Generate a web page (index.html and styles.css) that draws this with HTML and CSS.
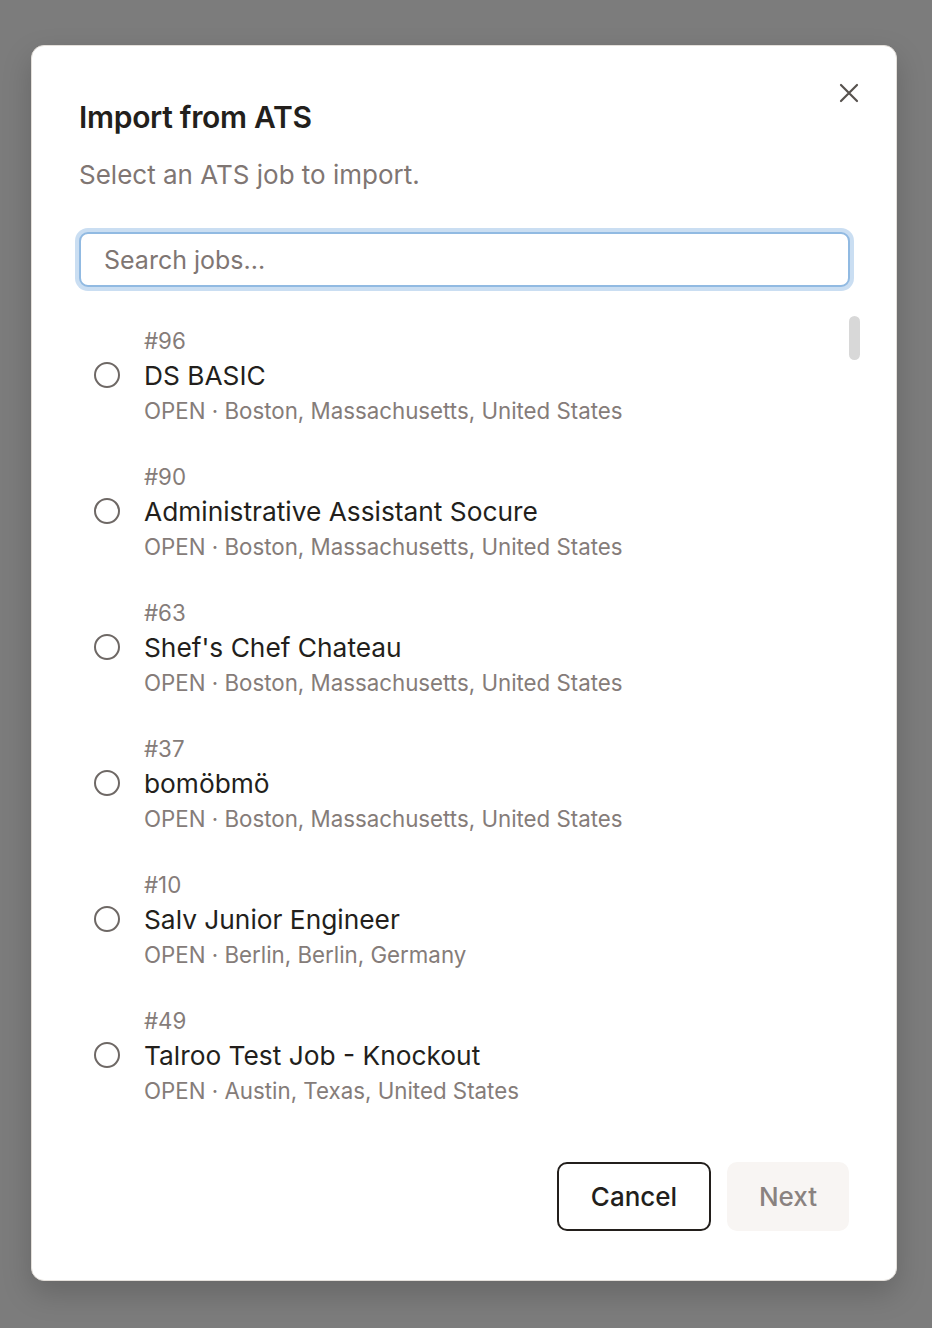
FILE: index.html
```html
<!DOCTYPE html>
<html lang="en">
<head>
<meta charset="utf-8">
<title>Import from ATS</title>
<link rel="stylesheet" href="styles.css">
</head>
<body>
<div class="overlay">
  <div class="modal" role="dialog" aria-labelledby="dlg-title">
    <button class="close" aria-label="Close">
      <svg width="22" height="22" viewBox="0 0 22 22" fill="none" stroke="#57524e" stroke-width="2.2" stroke-linecap="round"><path d="M3 3L19 19M19 3L3 19"/></svg>
    </button>
    <h2 class="title" id="dlg-title">Import from ATS</h2>
    <p class="subtitle">Select an ATS job to import.</p>
    <input class="search" type="text" placeholder="Search jobs...">
    <div class="list-wrap">
      <ul class="list">
        <li class="item"><span class="radio"></span><div class="info"><div class="num">#96</div><div class="name">DS BASIC</div><div class="meta">OPEN · Boston, Massachusetts, United States</div></div></li>
        <li class="item"><span class="radio"></span><div class="info"><div class="num">#90</div><div class="name">Administrative Assistant Socure</div><div class="meta">OPEN · Boston, Massachusetts, United States</div></div></li>
        <li class="item"><span class="radio"></span><div class="info"><div class="num">#63</div><div class="name">Shef's Chef Chateau</div><div class="meta">OPEN · Boston, Massachusetts, United States</div></div></li>
        <li class="item"><span class="radio"></span><div class="info"><div class="num">#37</div><div class="name">bomöbmö</div><div class="meta">OPEN · Boston, Massachusetts, United States</div></div></li>
        <li class="item"><span class="radio"></span><div class="info"><div class="num">#10</div><div class="name">Salv Junior Engineer</div><div class="meta">OPEN · Berlin, Berlin, Germany</div></div></li>
        <li class="item"><span class="radio"></span><div class="info"><div class="num">#49</div><div class="name">Talroo Test Job - Knockout</div><div class="meta">OPEN · Austin, Texas, United States</div></div></li>
      </ul>
      <div class="thumb"></div>
    </div>
    <div class="footer">
      <button class="btn btn-cancel">Cancel</button>
      <button class="btn btn-next" disabled>Next</button>
    </div>
  </div>
</div>
</body>
</html>
```

FILE: styles.css
```css
* { box-sizing: border-box; }
html, body {
  margin: 0;
  padding: 0;
  height: 100%;
}
body {
  font-family: Inter, "Noto Sans", "Liberation Sans", sans-serif;
  background: #7c7c7c;
  color: #231f1c;
}
.overlay {
  min-height: 1328px;
  padding: 45px 35px 0 31px;
}
.modal {
  position: relative;
  width: 866px;
  height: 1236px;
  background: #ffffff;
  border: 1px solid #e4e0db;
  border-radius: 13px;
  box-shadow: 0 12px 30px rgba(0,0,0,0.18);
  padding: 49px 47px 48px 47px;
  display: flex;
  flex-direction: column;
}
.close {
  position: absolute;
  top: 36px;
  right: 36px;
  width: 22px;
  height: 22px;
  padding: 0;
  border: 0;
  background: transparent;
  display: flex;
}
.title {
  margin: 0;
  font-size: 30px;
  line-height: 44px;
  font-weight: 600;
  letter-spacing: -0.3px;
  color: #231f1c;
}
.subtitle {
  margin: 20px 0 0;
  font-size: 26px;
  line-height: 32px;
  color: #7f7673;
}
.search {
  margin-top: 41px;
  width: 771px;
  height: 55px;
  border: 2px solid #91bae2;
  border-radius: 9px;
  box-shadow: 0 0 0 4px #cadef2;
  padding: 0 23px;
  font-family: inherit;
  font-size: 25px;
  color: #231f1c;
  outline: none;
}
.search::placeholder { color: #7f7673; }
.list-wrap {
  position: relative;
  margin-top: 20px;
  height: 816px;
}
.list {
  list-style: none;
  margin: 0;
  padding: 0;
  height: 100%;
  overflow: hidden;
}
.item {
  display: flex;
  align-items: center;
  padding: 15.5px 0 15.5px 15px;
  gap: 24px;
}
.radio {
  flex: none;
  width: 26px;
  height: 26px;
  border: 2px solid #6e6865;
  border-radius: 50%;
}
.info {
  display: flex;
  flex-direction: column;
}
.num, .meta {
  font-size: 22.3px;
  line-height: 35px;
  color: #857c79;
}
.name {
  font-size: 26.3px;
  line-height: 35px;
  color: #231f1c;
}
.thumb {
  position: absolute;
  top: 9px;
  right: -11px;
  width: 11px;
  height: 44px;
  border-radius: 6px;
  background: #d8d8d8;
}
.footer {
  margin-top: 39px;
  display: flex;
  justify-content: flex-end;
  gap: 16px;
}
.btn {
  height: 69px;
  border-radius: 10px;
  font-family: inherit;
  font-size: 26px;
  font-weight: 500;
}
.btn-cancel {
  width: 154px;
  border: 2px solid #231f1c;
  background: #ffffff;
  color: #231f1c;
}
.btn-next {
  width: 122px;
  border: 0;
  background: #f8f5f3;
  color: #8a8280;
}
```
